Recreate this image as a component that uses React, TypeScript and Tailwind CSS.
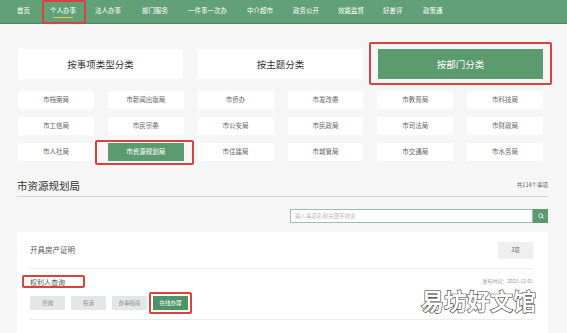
import { Search } from 'lucide-react'

const navItems = [
  { label: '首页', w: 'w-[33px]' },
  { label: '个人办事', w: 'w-[45px]' },
  { label: '法人办事', w: 'w-[47px]' },
  { label: '部门服务', w: 'w-[46px]' },
  { label: '一件事一次办', w: 'w-[59px]' },
  { label: '中介超市', w: 'w-[46px]' },
  { label: '政务公开', w: 'w-[45px]' },
  { label: '效能监督', w: 'w-[45px]' },
  { label: '好差评', w: 'w-[40px]' },
  { label: '政策通', w: 'w-[40px]' },
]

const tabs = ['按事项类型分类', '按主题分类', '按部门分类']

const depts = [
  '市档案局', '市新闻出版局', '市侨办', '市发改委', '市教育局', '市科技局',
  '市工信局', '市民宗委', '市公安局', '市民政局', '市司法局', '市财政局',
  '市人社局', '市资源规划局', '市住建局', '市城管局', '市交通局', '市水务局',
]

const actions = ['咨询', '投诉', '办事指南', '在线办理']

function RedBox({ className }: { className: string }) {
  return <span className={`pointer-events-none absolute border-2 border-[#d8433d] rounded-[2px] ${className}`} />
}

export default function App() {
  return (
    <div
      className="relative w-[567px] h-[333px] overflow-hidden bg-[#f6f6f6] text-[#333]"
      style={{ fontFamily: '"Noto Sans CJK SC", "Noto Sans", sans-serif' }}
    >
      {/* top nav */}
      <div className="h-[24px] bg-[#62a078] border-b border-[#4f8a64] flex items-start pt-[5px] pl-[17px] text-[6.5px] leading-[10px] text-white">
        {navItems.map((n) => (
          <div key={n.label} className={`${n.w} shrink-0`}>
            <span className="relative whitespace-nowrap">
              {n.label}
              {n.label === '个人办事' && (
                <>
                  <span className="absolute left-[3px] right-[3px] top-[12px] h-[1px] bg-[#e2c85a]" />
                  <RedBox className="-left-[8px] -right-[10px] -top-[5px] h-[24px]" />
                </>
              )}
            </span>
          </div>
        ))}
      </div>

      <div className="pl-[18px] pt-[25px] w-[543px]">
        {/* category tabs */}
        <div className="grid grid-cols-3 gap-[15px] h-[30px]">
          {tabs.map((t, i) => (
            <div
              key={t}
              className={`relative flex items-center justify-center text-[9.5px] ${
                i === 2 ? 'bg-[#5c9b70] text-white' : 'bg-white text-[#333]'
              }`}
            >
              {t}
              {i === 2 && <RedBox className="-left-[9px] -right-[9px] -top-[7px] -bottom-[6px]" />}
            </div>
          ))}
        </div>

        {/* departments */}
        <div className="mt-[12px] grid grid-cols-6 gap-x-[14px] gap-y-[8px]">
          {depts.map((d) => {
            const active = d === '市资源规划局'
            return (
              <div
                key={d}
                className={`relative h-[18px] flex items-center justify-center text-[6.5px] ${
                  active ? 'bg-[#5c9b70] text-white' : 'bg-white text-[#666]'
                }`}
              >
                {d}
                {active && <RedBox className="-left-[13px] -right-[10px] -top-[3px] -bottom-[4px]" />}
              </div>
            )
          })}
        </div>
      </div>

      {/* result section */}
      <div className="mt-[14px] ml-[17px] w-[531px]">
        <div className="h-[22px] flex items-center justify-between border-b border-[#d6d6d6]">
          <span className="text-[10.5px] text-[#333]">市资源规划局</span>
          <span className="text-[5.5px] text-[#666]">共114个事项</span>
        </div>

        <div className="mt-[12px] flex justify-end">
          <div className="w-[243px] h-[14px] border border-[#9fbfaa] bg-white flex items-center pl-[4px] text-[5.5px] text-[#b8b8b8]">
            输入事项名称关键字搜索
          </div>
          <div className="w-[15px] h-[14px] bg-[#5c9b70] flex items-center justify-center">
            <Search size={6} color="#fff" strokeWidth={3} />
          </div>
        </div>

        <div className="mt-[9px] bg-white pl-[13px] pr-[15px] h-[120px]">
          <div className="h-[37px] flex items-center justify-between border-b border-[#ececec]">
            <span className="text-[7.5px] text-[#555]">开具房产证明</span>
            <span className="w-[35px] h-[17px] bg-[#efefef] flex items-center justify-center text-[5.5px] text-[#666]">3项</span>
          </div>

          <div className="pt-[6px] pb-[9px] border-b border-[#ececec]">
            <div className="h-[14px] flex items-center justify-between">
              <span className="relative text-[7px] text-[#555]">
                权利人查询
                <RedBox className="-left-[8px] -right-[20px] -top-[2px] -bottom-[1px]" />
              </span>
              <span className="text-[5px] leading-[6px] text-[#999] -mt-[2px]">发布时间：2021-12-01</span>
            </div>
            <div className="mt-[7px] flex gap-[6px]">
              {actions.map((a, i) => (
                <span
                  key={a}
                  className={`relative w-[35px] h-[14px] flex items-center justify-center text-[5.5px] ${
                    i === 3 ? 'bg-[#4f9468] text-white' : 'bg-[#e3e8e5] text-[#8a8a8a]'
                  }`}
                >
                  {a}
                  {i === 3 && <RedBox className="-left-[4px] -right-[4px] -top-[4px] -bottom-[4px]" />}
                </span>
              ))}
            </div>
          </div>
        </div>
      </div>

      {/* watermark */}
      <div className="absolute left-[421px] top-[288px] text-[23px] leading-[25px] font-bold text-white [-webkit-text-stroke:1.2px_#3a3a3a] [paint-order:stroke_fill]">
        易坊好文馆
      </div>
    </div>
  )
}
